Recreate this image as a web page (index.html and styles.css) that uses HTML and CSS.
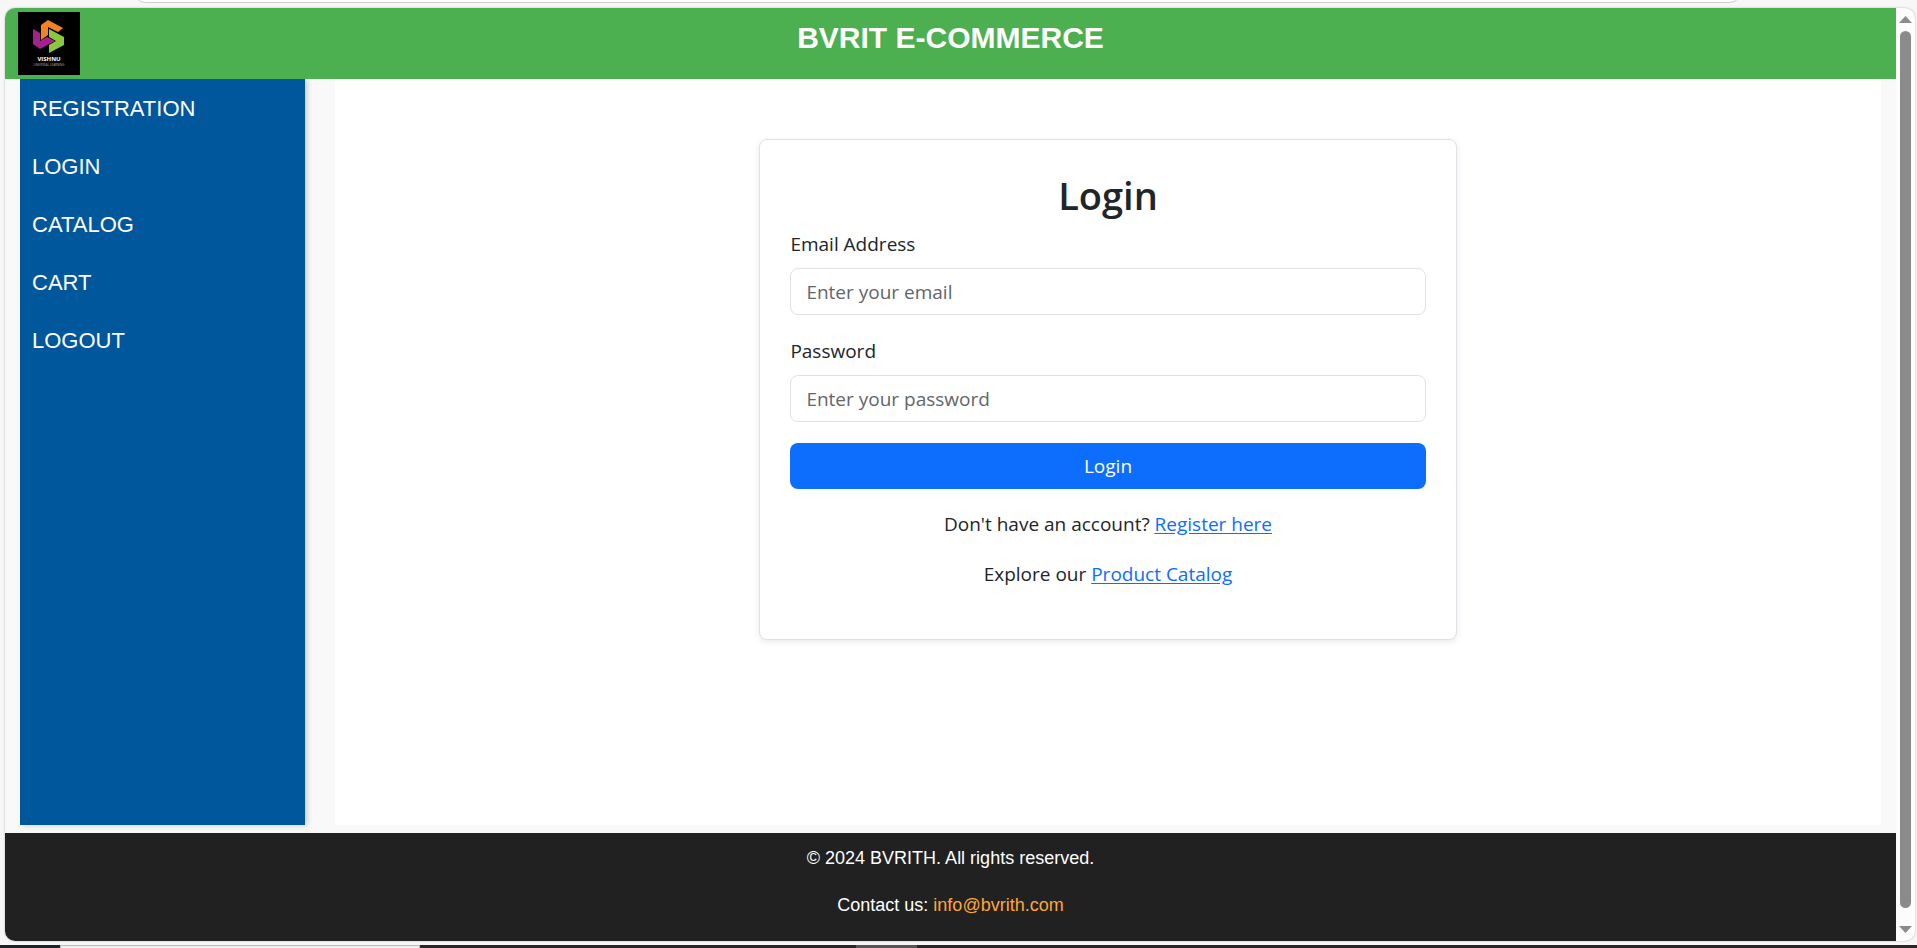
FILE: index.html
```html
<!DOCTYPE html>
<html lang="en">
<head>
<meta charset="utf-8">
<title>BVRIT E-Commerce</title>
<link rel="stylesheet" href="styles.css">
</head>
<body>
<div class="toolbar"><div class="address-edge"></div></div>
<div class="window">
  <div class="page">
    <header class="header">
      <svg class="logo" viewBox="0 0 62 63" role="img" aria-label="Vishnu Universal Learning">
        <rect width="62" height="63" fill="#000"/>
        <path d="M23 13 30 8 45 16 40 20 30 15 30 23 23 28Z" fill="#f58220"/>
        <path d="M15 17 22 21 22 29 29 25 37 29 22 37 15 32Z" fill="#a3238e"/>
        <path d="M31 17 46 25 46 33 31 41 31 33 38 29 31 25Z" fill="#8dc63f"/>
        <text x="31" y="49" class="logo-name">VISHNU</text>
        <text x="31" y="54" class="logo-sub">UNIVERSAL LEARNING</text>
      </svg>
      <h1 class="title">BVRIT E-COMMERCE</h1>
    </header>
    <div class="content">
      <nav class="sidebar">
        <a href="#register">REGISTRATION</a>
        <a href="#login">LOGIN</a>
        <a href="#catalog">CATALOG</a>
        <a href="#cart">CART</a>
        <a href="#logout">LOGOUT</a>
      </nav>
      <main class="main">
        <form class="card" id="login">
          <h2 class="card-title">Login</h2>
          <div class="field">
            <label for="email">Email Address</label>
            <input type="email" id="email" placeholder="Enter your email">
          </div>
          <div class="field">
            <label for="password">Password</label>
            <input type="password" id="password" placeholder="Enter your password">
          </div>
          <button type="submit" class="submit">Login</button>
          <p class="note">Don't have an account? <a href="#register">Register here</a></p>
          <p class="note">Explore our <a href="#catalog">Product Catalog</a></p>
        </form>
      </main>
    </div>
    <footer class="footer">
      <p>© 2024 BVRITH. All rights reserved.</p>
      <p>Contact us: <a href="mailto:info@bvrith.com">info@bvrith.com</a></p>
    </footer>
  </div>
  <div class="scrollbar" aria-hidden="true">
    <svg class="arrow" viewBox="0 0 13 7"><path d="M0 7 6.500 0 13 7Z"/></svg>
    <div class="thumb"></div>
    <svg class="arrow" viewBox="0 0 13 7"><path d="M0 0 6.500 7 13 0Z"/></svg>
  </div>
</div>
<div class="taskbar"><div class="task-start"></div><div class="task-search"></div><div class="task-rest"></div><div class="task-active"></div></div>
</body>
</html>
```
FILE: styles.css
```css
* { box-sizing: border-box; }

body {
  margin: 0;
  height: 100vh;
  display: flex;
  flex-direction: column;
  background: #f7f7f7;
  font-family: "Liberation Sans", Arial, sans-serif;
  overflow: hidden;
}

.toolbar {
  height: 8px;
  flex: none;
  display: flex;
  align-items: flex-start;
  padding: 0 174px 0 132px;
  overflow: hidden;
}

.address-edge {
  flex: 1;
  height: 30px;
  margin-top: -27px;
  background: #fff;
  border: 1px solid #cfcfcf;
  border-radius: 14px;
}

.window {
  flex: 1;
  min-height: 0;
  margin: 0 2px 4px 5px;
  display: flex;
  border-radius: 10px;
  overflow: hidden;
  background: #fcfcfc;
  box-shadow: 0 0 2px rgba(0, 0, 0, 0.3);
}

.page {
  flex: 1;
  display: flex;
  flex-direction: column;
  background: #f9f9f9;
}

.header {
  display: grid;
  grid-template-columns: 62px 1fr 62px;
  padding: 4px 13px;
  background: #4caf50;
}

.logo {
  display: block;
  width: 62px;
  height: 63px;
}

.logo-name {
  font: bold 6px "Open Sans", sans-serif;
  fill: #fff;
  text-anchor: middle;
}

.logo-sub {
  font: 3px "Open Sans", sans-serif;
  fill: #aaa;
  text-anchor: middle;
}

.title {
  margin: 8px 0 0;
  color: #fff;
  font-size: 30px;
  line-height: 36px;
  text-align: center;
}

.content {
  flex: 1;
  display: flex;
  gap: 30px;
  padding: 0 15px 8px;
}

.sidebar {
  width: 285px;
  display: flex;
  flex-direction: column;
  gap: 8px;
  padding-top: 5px;
  background: #01579b;
  box-shadow: 2px 0 6px rgba(0, 0, 0, 0.2);
  clip-path: inset(0 -16px -16px 0);
}

.sidebar a {
  padding: 10px 12px;
  color: #fff;
  font-size: 22px;
  line-height: 30px;
  text-decoration: none;
}

.main {
  flex: 1;
  padding-top: 60px;
  background: #fff;
}

.card {
  width: 45.1%;
  min-width: 360px;
  margin: 0 auto;
  padding: 31px 30px 30px;
  border: 1px solid #dee2e6;
  border-radius: 8px;
  background: #fff;
  box-shadow: 0 2px 6px rgba(0, 0, 0, 0.09);
  color: #212529;
  font-family: "Segoe UI", "Open Sans", sans-serif;
  font-size: 19px;
  line-height: 30px;
}

.card-title {
  margin: 0 0 10px;
  font-size: 38px;
  font-weight: 600;
  line-height: 48px;
  text-align: center;
}

.field {
  display: flex;
  flex-direction: column;
  gap: 9px;
  margin-bottom: 21px;
}

.field input {
  height: 47px;
  padding: 1px 15px 0;
  border: 1px solid #dee2e6;
  border-radius: 8px;
  background: #fff;
  color: #212529;
  font: inherit;
}

.field input::placeholder { color: #61666b; opacity: 1; }

.submit {
  display: block;
  width: 100%;
  height: 46px;
  margin-bottom: 20px;
  border: 0;
  border-radius: 8px;
  background: #0d6efd;
  color: #fff;
  font: inherit;
}

.note {
  margin: 0 0 20px;
  text-align: center;
}

.note a {
  color: #0d6efd;
  text-underline-offset: 2px;
}

.footer {
  padding: 10px 0 21px;
  background: #212121;
  color: #fff;
  font-size: 18px;
  line-height: 30px;
  text-align: center;
}

.footer p { margin: 0; }
.footer p + p { margin-top: 17px; }

.footer a {
  color: #ffa733;
  text-decoration: none;
}

.scrollbar {
  width: 19px;
  display: flex;
  flex-direction: column;
  align-items: center;
  gap: 8px;
  padding: 8px 0;
}

.arrow {
  width: 13px;
  height: 7px;
  fill: #8b8b8b;
}

.thumb {
  flex: 1;
  width: 11px;
  margin-bottom: 10px;
  border-radius: 6px;
  background: #8b8b8b;
}

.taskbar {
  height: 3px;
  flex: none;
  display: flex;
  background: #2a2526;
}

.task-start { width: 60px; background: #202428; }

.task-search {
  width: 360px;
  border: 1px solid #bbb;
  border-bottom: 0;
  background: #f0f0f0;
}

.task-rest { width: 436px; }
.task-active { width: 61px; background: #5a5556; }
```
